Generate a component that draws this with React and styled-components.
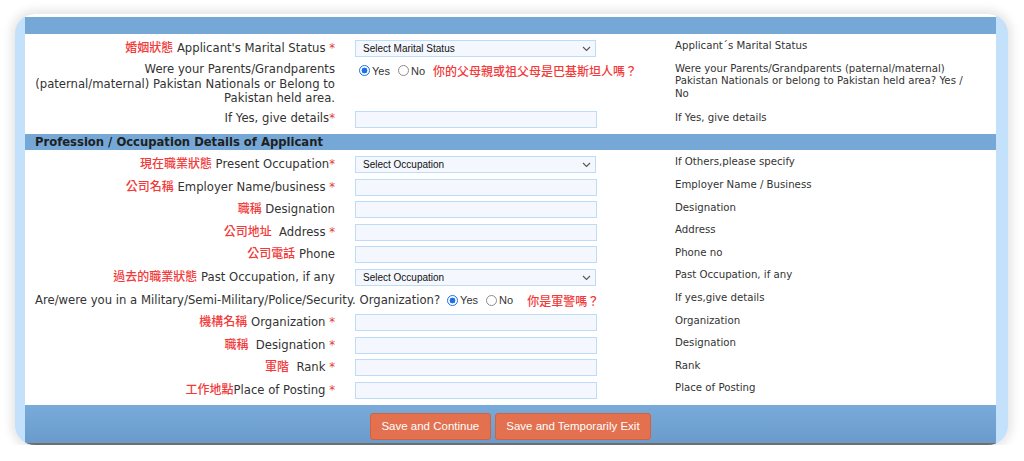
import React from "react";
import styled, { createGlobalStyle } from "styled-components";

const GlobalStyle = createGlobalStyle`
  html, body { margin: 0; padding: 0; background: #ffffff; }
  body { font-family: "DejaVu Sans", Verdana, "Noto Sans CJK TC", sans-serif; color: #333; }
  * { box-sizing: border-box; }
`;

const Frame = styled.div`
  margin: 14px 16px 0 15px;
  border-radius: 20px;
  background: #c4e1fc;
  padding: 0 12px 0 10px;
  box-shadow: 0 0 10px 4px rgba(0, 0, 0, 0.1);
  overflow: hidden;
`;

const Panel = styled.div`
  background: #ffffff;
  padding-top: 3px;
  border-bottom: 2px solid #6d6d6d;
`;

const BlueBar = styled.div`
  height: ${(p) => p.$h || 17}px;
  background: #75a8d7;
  margin: ${(p) => (p.$top ? "0 0 3px" : "3px 0")};
  padding-left: 10px;
  font-size: 11.6px;
  font-weight: bold;
  line-height: ${(p) => p.$h || 17}px;
  color: #1f1f1f;
`;

const FormGrid = styled.div`
  display: grid;
  grid-template-columns: 320px 320px 1fr;
`;

const LabelCell = styled.div`
  text-align: right;
  padding: 2.8px 10px 2.8px 0;
  font-size: 11.65px;
  line-height: 14.5px;
  color: #333;
`;

const FieldCell = styled.div`
  padding: 2.8px 0 2.8px 10px;
`;

const WideCell = styled.div`
  grid-column: span 2;
  padding: 2.8px 0 2.8px 10px;
  display: flex;
  align-items: center;
  font-size: 11.65px;
  line-height: 17px;
  color: #333;
`;

const HelpCell = styled.div`
  padding: 3.2px 10px 2.8px 10px;
  font-size: 10.2px;
  line-height: 12.5px;
  color: #333;
`;

const Zh = styled.span`
  font-family: "Noto Sans CJK TC", sans-serif;
  font-size: 12px;
  font-weight: 500;
  color: #f23a3a;
`;

const Req = styled.span`
  color: #e53935;
`;

const TextInput = styled.input`
  display: block;
  width: 242px;
  height: 17px;
  margin: 0;
  border: 1px solid #bcdcf7;
  background: #f4f8fe;
  outline: none;
`;

const SelectWrap = styled.div`
  position: relative;
  width: 241px;
  height: 17px;
`;

const Select = styled.select`
  appearance: none;
  -webkit-appearance: none;
  display: block;
  width: 100%;
  height: 17px;
  margin: 0;
  padding: 0 0 0 7px;
  border: 1px solid #bcdcf7;
  border-radius: 0;
  background: #f4f8fe;
  font-family: "Liberation Sans", Arial, sans-serif;
  font-size: 10px;
  color: #111;
  outline: none;
`;

const Chevron = styled.svg`
  position: absolute;
  right: 5px;
  top: 6px;
  pointer-events: none;
`;

const RadioGroup = styled.div`
  display: flex;
  align-items: center;
  height: 17px;
`;

const Radio = styled.input.attrs({ type: "radio" })`
  appearance: none;
  -webkit-appearance: none;
  width: 11px;
  height: 11px;
  margin: 0 2px 0 ${(p) => p.$ml || 0}px;
  border-radius: 50%;
  border: 1px solid #8c8c8c;
  background: #fff;
  flex: none;
  &:checked {
    border: 1.3px solid #1c6fe6;
    background: radial-gradient(circle, #1c6fe6 0 2.7px, #ffffff 3.2px);
  }
`;

const RadioText = styled.span`
  font-family: "Liberation Sans", Arial, sans-serif;
  font-size: 11px;
  color: #333;
  margin-right: ${(p) => p.$mr || 0}px;
`;

const Footer = styled.div`
  margin-top: 3px;
  padding: 8px 0 3px;
  background: linear-gradient(#78aada, #6a9bcb);
  display: flex;
  justify-content: center;
  gap: 4px;
`;

const Button = styled.button`
  height: 27px;
  padding: 0 10.5px;
  border: 1px solid #d2623f;
  border-radius: 3px;
  background: #e3704f;
  color: #fff;
  font-family: "Liberation Sans", Arial, sans-serif;
  font-size: 11.5px;
`;

const ChevronIcon = () => (
  <Chevron width="9" height="6" viewBox="0 0 9 6">
    <path d="M1 1l3.5 3.5L8 1" fill="none" stroke="#555" strokeWidth="1.1" />
  </Chevron>
);

const SelectBox = ({ placeholder }) => (
  <SelectWrap>
    <Select defaultValue="">
      <option value="">{placeholder}</option>
    </Select>
    <ChevronIcon />
  </SelectWrap>
);

const YesNo = ({ name, question, gap, ml }) => (
  <RadioGroup>
    <Radio name={name} defaultChecked $ml={ml} />
    <RadioText $mr={8}>Yes</RadioText>
    <Radio name={name} />
    <RadioText $mr={gap}>No</RadioText>
    <Zh>{question}</Zh>
  </RadioGroup>
);

const Row = ({ label, field, help }) => (
  <>
    <LabelCell>{label}</LabelCell>
    <FieldCell>{field}</FieldCell>
    <HelpCell>{help}</HelpCell>
  </>
);

const nb = "\u00a0";

export default function App() {
  return (
    <>
      <GlobalStyle />
      <Frame>
        <Panel>
          <BlueBar $top />
          <FormGrid>
            <Row
              label={<><Zh>婚姻狀態</Zh> Applicant's Marital Status <Req>*</Req></>}
              field={<SelectBox placeholder="Select Marital Status" />}
              help="Applicant´s Marital Status"
            />
            <Row
              label={<>Were your Parents/Grandparents<br />(paternal/maternal) Pakistan Nationals or Belong to<br />Pakistan held area.</>}
              field={<YesNo name="parents" question="你的父母親或祖父母是巴基斯坦人嗎？" gap={8} ml={4} />}
              help={<>Were your Parents/Grandparents (paternal/maternal)<br />Pakistan Nationals or belong to Pakistan held area? Yes /<br />No</>}
            />
            <Row
              label={<>If Yes, give details<Req>*</Req></>}
              field={<TextInput />}
              help="If Yes, give details"
            />
          </FormGrid>
          <BlueBar $h={16}>Profession / Occupation Details of Applicant</BlueBar>
          <FormGrid>
            <Row
              label={<><Zh>現在職業狀態</Zh> Present Occupation<Req>*</Req></>}
              field={<SelectBox placeholder="Select Occupation" />}
              help="If Others,please specify"
            />
            <Row
              label={<><Zh>公司名稱</Zh> Employer Name/business <Req>*</Req></>}
              field={<TextInput />}
              help="Employer Name / Business"
            />
            <Row
              label={<><Zh>職稱</Zh> Designation</>}
              field={<TextInput />}
              help="Designation"
            />
            <Row
              label={<><Zh>公司地址</Zh> {nb}Address <Req>*</Req></>}
              field={<TextInput />}
              help="Address"
            />
            <Row
              label={<><Zh>公司電話</Zh> Phone</>}
              field={<TextInput />}
              help="Phone no"
            />
            <Row
              label={<><Zh>過去的職業狀態</Zh> Past Occupation, if any</>}
              field={<SelectBox placeholder="Select Occupation" />}
              help="Past Occupation, if any"
            />
            <WideCell>
              Are/were you in a Military/Semi-Military/Police/Security. Organization?
              <YesNo name="military" question="你是軍警嗎？" gap={14} ml={7} />
            </WideCell>
            <HelpCell>If yes,give details</HelpCell>
            <Row
              label={<><Zh>機構名稱</Zh> Organization <Req>*</Req></>}
              field={<TextInput />}
              help="Organization"
            />
            <Row
              label={<><Zh>職稱</Zh> {nb}Designation <Req>*</Req></>}
              field={<TextInput />}
              help="Designation"
            />
            <Row
              label={<><Zh>軍階</Zh> {nb}Rank <Req>*</Req></>}
              field={<TextInput />}
              help="Rank"
            />
            <Row
              label={<><Zh>工作地點</Zh>Place of Posting <Req>*</Req></>}
              field={<TextInput />}
              help="Place of Posting"
            />
          </FormGrid>
          <Footer>
            <Button>Save and Continue</Button>
            <Button>Save and Temporarily Exit</Button>
          </Footer>
        </Panel>
      </Frame>
    </>
  );
}
